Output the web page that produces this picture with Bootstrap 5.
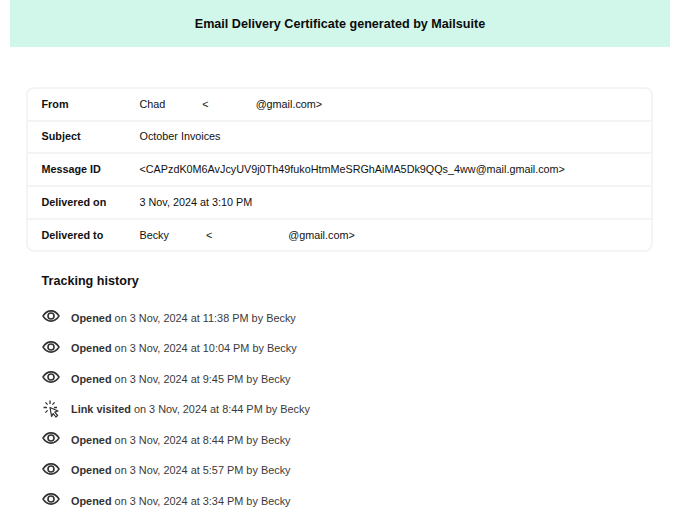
<!DOCTYPE html>
<html lang="en">
<head>
<meta charset="utf-8">
<title>Email Delivery Certificate</title>
<link href="https://cdn.jsdelivr.net/npm/bootstrap@5.3.0/dist/css/bootstrap.min.css" rel="stylesheet">
<style>
html, body { height: 520px; overflow: hidden; background: #fff; }
body { font-family: "Liberation Sans", Arial, sans-serif; color: #111; font-size: 10.8px; line-height: 14px; }
.cert-page { padding: 0 13px 0 10px; }
.cert-banner { height: 47px; background: #d1f7ea; font-size: 12.6px; font-weight: 700; color: #0b0b0b; }
.cert-box { margin: 40px 17px 0 16px; border: 2px solid #f3f4f4; border-radius: 8px; }
.cert-row { height: 32.7px; padding: 0 0 1.2px 13.5px; border-bottom: 2px solid #f3f4f4; }
.cert-row:last-child { border-bottom: 0; height: 30.7px; }
.cert-label { width: 98px; font-weight: 700; flex: none; }
.cert-gap-a { width: 34px; display: inline-block; }
.cert-gap-b { width: 47px; display: inline-block; }
.cert-gap-c { width: 34px; display: inline-block; }
.cert-gap-d { width: 76px; display: inline-block; }
.track-title { margin: 21px 0 13px 31.5px; font-size: 12.6px; line-height: 16px; font-weight: 700; }
.track-list { margin-left: 32px; color: #3a3a3a; font-size: 10.9px; }
.track-item { height: 30.5px; }
.track-item b { color: #333; }
.track-icon { width: 18px; margin: -3px 11px 0 0; flex: none; color: #333; }
.track-icon-click { margin-top: -1px; }
</style>
</head>
<body>
<div class="cert-page">
  <div class="cert-banner d-flex align-items-center justify-content-center">Email Delivery Certificate generated by Mailsuite</div>
  <div class="cert-box">
    <div class="cert-row d-flex align-items-center"><div class="cert-label">From</div><div>Chad<span class="cert-gap-a"></span> &lt;<span class="cert-gap-b"></span>@gmail.com&gt;</div></div>
    <div class="cert-row d-flex align-items-center"><div class="cert-label">Subject</div><div>October Invoices</div></div>
    <div class="cert-row d-flex align-items-center"><div class="cert-label">Message ID</div><div>&lt;CAPzdK0M6AvJcyUV9j0Th49fukoHtmMeSRGhAiMA5Dk9QQs_4ww@mail.gmail.com&gt;</div></div>
    <div class="cert-row d-flex align-items-center"><div class="cert-label">Delivered on</div><div>3 Nov, 2024 at 3:10 PM</div></div>
    <div class="cert-row d-flex align-items-center"><div class="cert-label">Delivered to</div><div>Becky<span class="cert-gap-c"></span> &lt;<span class="cert-gap-d"></span>@gmail.com&gt;</div></div>
  </div>
  <div class="track-title">Tracking history</div>
  <svg width="0" height="0" class="d-block">
    <symbol id="ic-eye" viewBox="0 0 18 12"><path d="M1 6C3.2 2.6 5.900 .9 9 .9s5.800 1.700 8 5.100c-2.200 3.400-4.900 5.100-8 5.100S3.200 9.400 1 6Z" fill="none" stroke="currentColor" stroke-width="1.600" stroke-linejoin="round"/><circle cx="9" cy="6" r="3" fill="none" stroke="currentColor" stroke-width="1.600"/></symbol>
    <symbol id="ic-click" viewBox="0 0 18 18"><path d="M8 .5v3.500M3.400 2.400l2.200 2.200M1.500 7.500h3.500M3.400 12.600l2.200-2.200M12.600 2.400l-2.200 2.200M15 7.500h-3" fill="none" stroke="currentColor" stroke-width="1.300"/><path d="M8 7.500 16 11l-3.200 1.100 2.800 3.400-1.700 1.500-2.700-3.400-1.600 2.800Z" fill="#fff" stroke="currentColor" stroke-width="1.200" stroke-linejoin="round"/></symbol>
  </svg>
  <div class="track-list">
    <div class="track-item d-flex align-items-center"><svg class="track-icon" width="18" height="12"><use href="#ic-eye"/></svg><div><b>Opened</b> on 3 Nov, 2024 at 11:38 PM by Becky</div></div>
    <div class="track-item d-flex align-items-center"><svg class="track-icon" width="18" height="12"><use href="#ic-eye"/></svg><div><b>Opened</b> on 3 Nov, 2024 at 10:04 PM by Becky</div></div>
    <div class="track-item d-flex align-items-center"><svg class="track-icon" width="18" height="12"><use href="#ic-eye"/></svg><div><b>Opened</b> on 3 Nov, 2024 at 9:45 PM by Becky</div></div>
    <div class="track-item d-flex align-items-center"><svg class="track-icon track-icon-click" width="18" height="18"><use href="#ic-click"/></svg><div><b>Link visited</b> on 3 Nov, 2024 at 8:44 PM by Becky</div></div>
    <div class="track-item d-flex align-items-center"><svg class="track-icon" width="18" height="12"><use href="#ic-eye"/></svg><div><b>Opened</b> on 3 Nov, 2024 at 8:44 PM by Becky</div></div>
    <div class="track-item d-flex align-items-center"><svg class="track-icon" width="18" height="12"><use href="#ic-eye"/></svg><div><b>Opened</b> on 3 Nov, 2024 at 5:57 PM by Becky</div></div>
    <div class="track-item d-flex align-items-center"><svg class="track-icon" width="18" height="12"><use href="#ic-eye"/></svg><div><b>Opened</b> on 3 Nov, 2024 at 3:34 PM by Becky</div></div>
  </div>
</div>
<script src="https://cdn.jsdelivr.net/npm/bootstrap@5.3.0/dist/js/bootstrap.bundle.min.js"></script>
</body>
</html>
